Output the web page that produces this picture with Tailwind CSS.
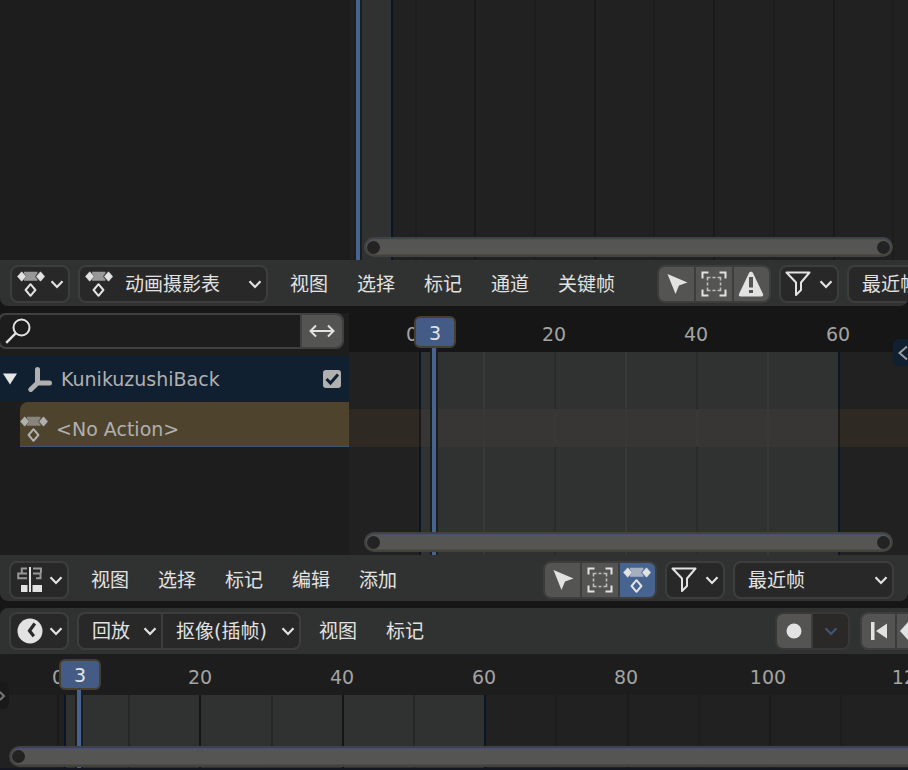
<!DOCTYPE html>
<html lang="zh-CN">
<head>
<meta charset="utf-8">
<title>动画摄影表</title>
<script src="https://cdn.jsdelivr.net/npm/@tailwindcss/browser@4"></script>
</head>
<body class="flex h-screen min-h-[600px] flex-col overflow-hidden bg-[#161616] font-['DejaVu_Sans','Noto_Sans_CJK_SC',sans-serif] text-[19px] leading-6 text-[#e2e2e2]">

<svg class="hidden" aria-hidden="true">
  <symbol id="i-dope" viewBox="0 0 28 26">
    <path d="M7 .8h13.500v1.500L18 5.500l2.500 3v1.300H7V8.500l2.500-3L7 2.300z" fill="currentColor" opacity=".6"/>
    <path d="M4.700 .8l4.200 4.700-4.200 4.700L.5 5.500zM23.500 .8l4.200 4.700-4.200 4.700-4.200-4.700z" fill="currentColor" stroke="currentColor" stroke-width=".6" stroke-linejoin="round"/>
    <path d="M13.500 13.200l4.900 5.800-4.900 5.800L8.600 19z" fill="none" stroke="currentColor" stroke-width="2" stroke-linejoin="round"/>
  </symbol>
  <symbol id="i-chev" viewBox="0 0 14 10"><path d="M1.500 2.300L7 8l5.500-5.700" fill="none" stroke="currentColor" stroke-width="2.200"/></symbol>
  <symbol id="i-cursor" viewBox="0 0 26 26"><path d="M3.500 3l20 8.500-8.500 3-3.500 8.500z" fill="currentColor"/></symbol>
  <symbol id="i-box" viewBox="0 0 26 26">
    <path d="M1.500 7.500V1.500h6M18.500 1.500h6v6M24.500 18.500v6h-6M7.500 24.500h-6v-6" fill="none" stroke="currentColor" stroke-width="2"/>
    <path d="M6.500 9.500v-3h3M11.500 6.500h3M16.500 6.500h3v3M19.500 11.500v3M19.500 16.500v3h-3M14.500 19.500h-3M9.500 19.500h-3v-3M6.500 14.500v-3" fill="none" stroke="currentColor" stroke-width="1.600" opacity=".75"/>
  </symbol>
  <symbol id="i-warn" viewBox="0 0 26 26"><path d="M13 .8c.9 0 1.600.5 2 1.200l10 21c.6 1.300-.2 2.500-1.500 2.500h-21C1.200 25.500.4 24.300 1 23L11 2c.4-.7 1.100-1.200 2-1.200zM11 6v10.500h4V6zm0 13v3h4v-3z" fill="currentColor" fill-rule="evenodd"/></symbol>
  <symbol id="i-filter" viewBox="0 0 26 26"><path d="M1.500 1.500h23L16 11.500v7.500l-5 5V11.500z" fill="none" stroke="currentColor" stroke-width="2" stroke-linejoin="round"/></symbol>
  <symbol id="i-nla" viewBox="0 0 26 26">
    <path d="M10 1.500H4.800v4.300M10 6.500H1.200v4.700H10M16 1.500h8v4.300M16 6.500h7.500v4.700H19" fill="none" stroke="currentColor" stroke-width="2" opacity=".6"/>
    <path d="M12 0h2v25h-2zM4 18h6.500v7H4zM15.500 18H25v7h-9.500z" fill="currentColor"/>
  </symbol>
  <symbol id="i-clock" viewBox="0 0 26 26"><circle cx="13" cy="13" r="12.500" fill="currentColor"/><path d="M17.800 5.500L12.500 12.800l4.300 5.400" fill="none" stroke="#292929" stroke-width="3.200"/></symbol>
</svg>

<!-- upper channel view -->
<section class="relative min-h-0 flex-1 overflow-hidden bg-[#1d1d1d]" aria-label="通道">
  <svg class="absolute inset-0 h-full w-full" aria-hidden="true">
    <rect x="350" width="100%" height="100%" fill="#212121"/>
    <rect x="362" width="29" height="100%" fill="#303231"/>
    <rect x="354" width="8" height="100%" fill="#1c1c1c"/>
    <rect x="356" width="4" height="100%" fill="#476490"/>
    <rect x="391" width="2" height="100%" fill="#091627"/>
    <g fill="#1d1d1d"><rect x="415" width="2" height="100%"/><rect x="534" width="2" height="100%"/><rect x="653" width="2" height="100%"/><rect x="773" width="2" height="100%"/><rect x="892" width="2" height="100%"/></g>
    <g fill="#191919"><rect x="474" width="2" height="100%"/><rect x="594" width="2" height="100%"/><rect x="713" width="2" height="100%"/><rect x="833" width="2" height="100%"/></g>
  </svg>
  <div class="absolute right-[15px] bottom-[3px] left-[364px] flex h-5 items-center justify-between rounded-full border-2 border-[#424240] bg-[#555553] px-px shadow-[inset_0_1px_0_#41536e,inset_0_-1px_0_#504b3c]"><i class="size-[13px] rounded-full bg-[#232323]"></i><i class="size-[13px] rounded-full bg-[#232323]"></i></div>
</section>

<!-- dope sheet header -->
<header class="flex h-[46px] flex-none items-center overflow-hidden rounded-b-lg bg-[#303231] pt-[2px] pl-[10px]">
  <button aria-label="编辑器类型" class="mr-2 flex h-[38px] w-[60px] flex-none items-center justify-between rounded-lg border-2 border-[#3d3d3d] bg-[#282828] pr-1 pl-[5px]"><svg class="h-[26px] w-7"><use href="#i-dope"/></svg><svg class="h-[10px] w-[14px]"><use href="#i-chev"/></svg></button>
  <div class="relative mr-[22px] flex-none">
    <select aria-label="模式" class="h-[38px] w-[190px] appearance-none rounded-lg border-2 border-[#3d3d3d] bg-[#282828] pl-[45px]"><option>动画摄影表</option></select>
    <svg class="pointer-events-none absolute top-[6px] left-[7px] h-[26px] w-7"><use href="#i-dope"/></svg>
    <svg class="pointer-events-none absolute top-[14px] right-[6px] h-[10px] w-[14px]"><use href="#i-chev"/></svg>
  </div>
  <nav class="mr-[42px] flex flex-none gap-[29px]"><button>视图</button><button>选择</button><button>标记</button><button>通道</button><button>关键帧</button></nav>
  <div class="mr-2 flex h-[38px] w-[114px] flex-none gap-[2px] overflow-hidden rounded-lg border-2 border-[#3d3d3d] bg-[#3d3d3d]">
    <button aria-label="仅选中项" class="grid flex-1 place-items-center bg-[#545452]"><svg class="size-[26px]"><use href="#i-cursor"/></svg></button>
    <button aria-label="显示隐藏项" class="grid flex-1 place-items-center bg-[#545452]"><svg class="size-[26px]"><use href="#i-box"/></svg></button>
    <button aria-label="仅显示错误" class="grid flex-1 place-items-center bg-[#545452]"><svg class="size-[26px]"><use href="#i-warn"/></svg></button>
  </div>
  <button aria-label="过滤器" class="mr-2 flex h-[38px] w-[60px] flex-none items-center justify-between rounded-lg border-2 border-[#3d3d3d] bg-[#282828] pr-1 pl-1"><svg class="size-[26px]"><use href="#i-filter"/></svg><svg class="h-[10px] w-[14px]"><use href="#i-chev"/></svg></button>
  <select aria-label="吸附" class="h-[38px] w-[161px] flex-none appearance-none rounded-lg border-2 border-[#3d3d3d] bg-[#282828] pl-[13px]"><option>最近帧</option></select>
</header>

<!-- dope sheet body -->
<main class="flex h-[249px] flex-none">
  <section class="w-[349px] flex-none bg-[#1d1d1d]">
    <div class="h-[7px] bg-[#161616]"></div>
    <div class="mr-[5px] mb-[7px] -ml-[2px] flex h-9 overflow-hidden rounded-lg border-2 border-[#404040] bg-[#1d1d1d]">
      <label class="flex flex-1 items-center pl-[5px]"><svg viewBox="0 0 26 26" class="size-[26px] flex-none"><circle cx="16.500" cy="9.500" r="8" fill="none" stroke="currentColor" stroke-width="2"/><path d="M10.800 15.200L1.200 24.800" stroke="currentColor" stroke-width="2.400"/></svg><input type="search" aria-label="搜索" class="w-full bg-transparent px-2 outline-none"></label>
      <button aria-label="反转过滤" class="grid w-[42px] place-items-center border-l-2 border-[#404040] bg-[#545452]"><svg viewBox="0 0 26 14" class="h-[14px] w-[26px]"><path d="M1.500 7h23M7 1.500L1.500 7 7 12.500M19 1.500L24.500 7 19 12.500" fill="none" stroke="currentColor" stroke-width="2"/></svg></button>
    </div>
    <div class="flex h-[45px] items-center bg-[#112030] pr-2 pl-[3px] text-[#b0b0b0]">
      <button aria-label="折叠" class="mr-[11px]"><svg viewBox="0 0 14 12" class="h-3 w-[14px]"><path d="M0 .5h14L7 11.500z" fill="#e6e6e6"/></svg></button>
      <svg viewBox="0 0 24 26" class="mr-[9px] h-[26px] w-6"><path d="M9.500 3.500v13.500H21.500M9.500 17L2.800 23.500" fill="none" stroke="currentColor" stroke-width="5" stroke-linecap="round" stroke-linejoin="round"/></svg>
      <label for="chan" class="flex-1">KunikuzushiBack</label>
      <span class="relative flex"><input id="chan" type="checkbox" checked class="size-[18px] appearance-none rounded-[3px] bg-[#b0b0b0]"><svg viewBox="0 0 18 18" class="pointer-events-none absolute inset-0 size-[18px]"><path d="M3.500 9l4 4L15 4.500" fill="none" stroke="#112030" stroke-width="3"/></svg></span>
    </div>
    <div class="mt-px ml-5 flex h-[45px] items-center rounded-tl-lg border-b border-[#3f5470] bg-[#4e432d] pt-[10px] text-[#b0b0b0]">
      <svg class="mr-2 h-[26px] w-7"><use href="#i-dope"/></svg><span>&lt;No Action&gt;</span>
    </div>
  </section>
  <section class="relative flex min-w-0 flex-1 flex-col overflow-hidden">
    <div class="-ml-[8px] flex h-[46px] items-center pt-[9px] text-[#a3a3a3]"><span class="w-[142px] flex-none text-center">0</span><span class="w-[142px] flex-none text-center">20</span><span class="w-[142px] flex-none text-center">40</span><span class="w-[142px] flex-none text-center">60</span></div>
    <svg class="w-full flex-1" aria-hidden="true">
      <rect width="100%" height="100%" fill="#212121"/>
      <rect y="57" width="100%" height="38" fill="#2e2923"/>
      <rect x="72" width="418" height="100%" fill="#303231"/>
      <rect x="72" y="57" width="418" height="38" fill="#383634"/>
      <g fill="#393838"><rect x="134" width="2" height="100%"/><rect x="276" width="2" height="100%"/><rect x="418" width="2" height="100%"/></g>
      <g fill="#2a2b2a"><rect x="205" width="2" height="57"/><rect x="347" width="2" height="57"/><rect x="205" y="95" width="2" height="100%"/><rect x="347" y="95" width="2" height="100%"/></g>
      <g fill="#393834"><rect x="205" y="57" width="2" height="38"/><rect x="347" y="57" width="2" height="38"/></g>
      <g fill="#091627"><rect x="70" width="2" height="100%"/><rect x="489" width="2" height="100%"/></g>
      <g fill="#1a1a1a"><rect x="70" y="57" width="2" height="38"/><rect x="489" y="57" width="2" height="38"/></g>
    </svg>
    <div class="absolute top-[40px] bottom-0 left-[83px] w-1 bg-[#476490] outline-2 outline-[#1c1e1d]"></div>
    <div class="absolute top-[10px] left-[65px] flex h-8 w-[42px] items-center justify-center rounded-md border-2 border-[#474032] bg-[#435b85] pt-px">3</div>
    <div class="absolute right-[15px] bottom-[3px] left-[15px] flex h-5 items-center justify-between rounded-full border-2 border-[#424240] bg-[#555553] px-px shadow-[inset_0_1px_0_#41536e,inset_0_-1px_0_#504b3c]"><i class="size-[13px] rounded-full bg-[#232323]"></i><i class="size-[13px] rounded-full bg-[#232323]"></i></div>
    <button aria-label="展开侧栏" class="absolute top-[33px] right-0 flex h-[27px] w-[15px] items-center justify-end rounded-l-md bg-[#112030]"><svg viewBox="0 0 11 16" class="h-4 w-[11px]"><path d="M10 1.500L2.500 8l7.500 6.500" fill="none" stroke="#9a9a9a" stroke-width="2"/></svg></button>
  </section>
</main>

<!-- NLA header -->
<header class="mb-[7px] flex h-[46px] flex-none items-center overflow-hidden rounded-b-lg bg-[#303231] pt-1 pr-[14px] pl-[9px]">
  <button aria-label="编辑器类型" class="mr-[22px] flex h-[38px] w-[60px] flex-none items-center justify-between rounded-lg border-2 border-[#3d3d3d] bg-[#282828] pr-1 pl-[6px]"><svg class="size-[26px]"><use href="#i-nla"/></svg><svg class="h-[10px] w-[14px]"><use href="#i-chev"/></svg></button>
  <nav class="flex flex-none gap-[29px]"><button>视图</button><button>选择</button><button>标记</button><button>编辑</button><button>添加</button></nav>
  <div class="mr-2 ml-auto flex h-[38px] w-[114px] flex-none gap-[2px] overflow-hidden rounded-lg border-2 border-[#3d3d3d] bg-[#3d3d3d]">
    <button aria-label="仅选中项" class="grid flex-1 place-items-center bg-[#545452]"><svg class="size-[26px]"><use href="#i-cursor"/></svg></button>
    <button aria-label="显示隐藏项" class="grid flex-1 place-items-center bg-[#545452]"><svg class="size-[26px]"><use href="#i-box"/></svg></button>
    <button aria-label="包含缺失项" aria-pressed="true" class="grid flex-1 place-items-center bg-[#476490]"><svg class="h-[26px] w-7"><use href="#i-dope"/></svg></button>
  </div>
  <button aria-label="过滤器" class="mr-2 flex h-[38px] w-[60px] flex-none items-center justify-between rounded-lg border-2 border-[#3d3d3d] bg-[#282828] pr-1 pl-1"><svg class="size-[26px]"><use href="#i-filter"/></svg><svg class="h-[10px] w-[14px]"><use href="#i-chev"/></svg></button>
  <div class="relative flex-none">
    <select aria-label="吸附" class="h-[38px] w-[161px] appearance-none rounded-lg border-2 border-[#3d3d3d] bg-[#282828] pl-[13px]"><option>最近帧</option></select>
    <svg class="pointer-events-none absolute top-[14px] right-[6px] h-[10px] w-[14px]"><use href="#i-chev"/></svg>
  </div>
</header>

<!-- timeline header -->
<header class="flex h-[46px] flex-none items-center overflow-hidden rounded-tl-lg bg-[#303231] pl-[9px]">
  <button aria-label="编辑器类型" class="mr-2 flex h-[38px] w-[60px] flex-none items-center justify-between rounded-lg border-2 border-[#3d3d3d] bg-[#282828] pr-1 pl-[6px]"><svg class="size-[26px]"><use href="#i-clock"/></svg><svg class="h-[10px] w-[14px]"><use href="#i-chev"/></svg></button>
  <div class="mr-[18px] flex h-[38px] w-[224px] flex-none rounded-lg border-2 border-[#3d3d3d] bg-[#282828]">
    <button class="flex w-[84px] items-center justify-between border-r-2 border-[#3d3d3d] pr-1 pl-[13px]">回放<svg class="h-[10px] w-[14px]"><use href="#i-chev"/></svg></button>
    <button class="flex flex-1 items-center justify-between pr-1 pl-[13px]"><span class="whitespace-nowrap">抠像(插帧)</span><svg class="h-[10px] w-[14px]"><use href="#i-chev"/></svg></button>
  </div>
  <nav class="flex flex-none gap-[29px]"><button>视图</button><button>标记</button></nav>
  <div class="mr-[10px] ml-auto flex h-[38px] w-[75px] flex-none overflow-hidden rounded-lg border-2 border-[#393836] bg-[#2b2927]">
    <button aria-label="自动插帧" class="grid w-9 place-items-center border-r-2 border-[#3d3d3d] bg-[#545452]"><svg viewBox="0 0 16 16" class="size-4"><circle cx="8" cy="8" r="7.500" fill="currentColor"/></svg></button>
    <button aria-label="自动插帧选项" class="grid flex-1 place-items-center text-[#3e5478]"><svg class="h-[10px] w-[14px]"><use href="#i-chev"/></svg></button>
  </div>
  <div class="flex h-[38px] w-[48px] flex-none gap-[2px] overflow-hidden rounded-l-lg border-2 border-r-0 border-[#3d3d3d] bg-[#3d3d3d]">
    <button aria-label="跳到起点" class="grid w-[34px] place-items-center bg-[#545452]"><svg viewBox="0 0 18 18" class="size-[18px]"><path d="M1 0h3.500v18H1zM17 1.500v15L6 9z" fill="currentColor"/></svg></button>
    <button aria-label="上一关键帧" class="flex flex-1 items-center bg-[#545452] pl-[3px]"><svg viewBox="0 0 8 18" class="h-[18px] w-2"><path d="M8 0v18L0 9z" fill="currentColor"/></svg></button>
  </div>
</header>

<!-- timeline body -->
<section class="relative flex h-[116px] flex-none flex-col overflow-hidden bg-[#1d1d1d]" aria-label="时间线">
  <div class="-ml-[13px] flex h-[41px] items-center pt-[5px] text-[#a3a3a3]"><span class="w-[142px] flex-none text-center">0</span><span class="w-[142px] flex-none text-center">20</span><span class="w-[142px] flex-none text-center">40</span><span class="w-[142px] flex-none text-center">60</span><span class="w-[142px] flex-none text-center">80</span><span class="w-[142px] flex-none text-center">100</span><span class="w-[142px] flex-none text-center">120</span></div>
  <svg class="w-full flex-1" aria-hidden="true">
    <rect width="100%" height="100%" fill="#212121"/>
    <rect x="66" width="419" height="100%" fill="#303231"/>
    <g fill="#262726"><rect x="128" width="2" height="100%"/><rect x="271" width="2" height="100%"/><rect x="413" width="2" height="100%"/></g>
    <g fill="#151515"><rect x="199" width="2" height="100%"/><rect x="342" width="2" height="100%"/></g>
    <g fill="#1b1b1b"><rect x="57" width="2" height="100%"/><rect x="627" width="2" height="100%"/><rect x="769" width="2" height="100%"/></g>
    <g fill="#1d1d1d"><rect x="555" width="2" height="100%"/><rect x="698" width="2" height="100%"/><rect x="840" width="2" height="100%"/></g>
    <g fill="#091627"><rect x="64" width="2" height="100%"/><rect x="484" width="2" height="100%"/></g>
  </svg>
  <div class="absolute top-[34px] bottom-0 left-[77px] w-1 bg-[#476490] outline-2 outline-[#1c1e1d]"></div>
  <div class="absolute top-[5px] left-[59px] flex h-[31px] w-[42px] items-center justify-center rounded-md border-2 border-[#474032] bg-[#435b85] pt-px">3</div>
  <button aria-label="展开工具栏" class="absolute top-7 left-0 flex h-[27px] w-[9px] items-center rounded-r-md bg-[#191919]"><svg viewBox="0 0 6 12" class="h-3 w-[6px]"><path d="M0 2l4 4-4 4" fill="none" stroke="#777" stroke-width="2"/></svg></button>
  <div class="absolute -right-5 bottom-[3px] left-[9px] flex h-[21px] items-center rounded-full border-2 border-[#424240] bg-[#555553] px-px shadow-[inset_0_1px_0_#41536e,inset_0_-1px_0_#504b3c]"><i class="size-[13px] rounded-full bg-[#232323]"></i></div>
  <div class="absolute inset-x-0 bottom-0 h-[2px] bg-[#141722]"></div>
</section>
</body>
</html>
